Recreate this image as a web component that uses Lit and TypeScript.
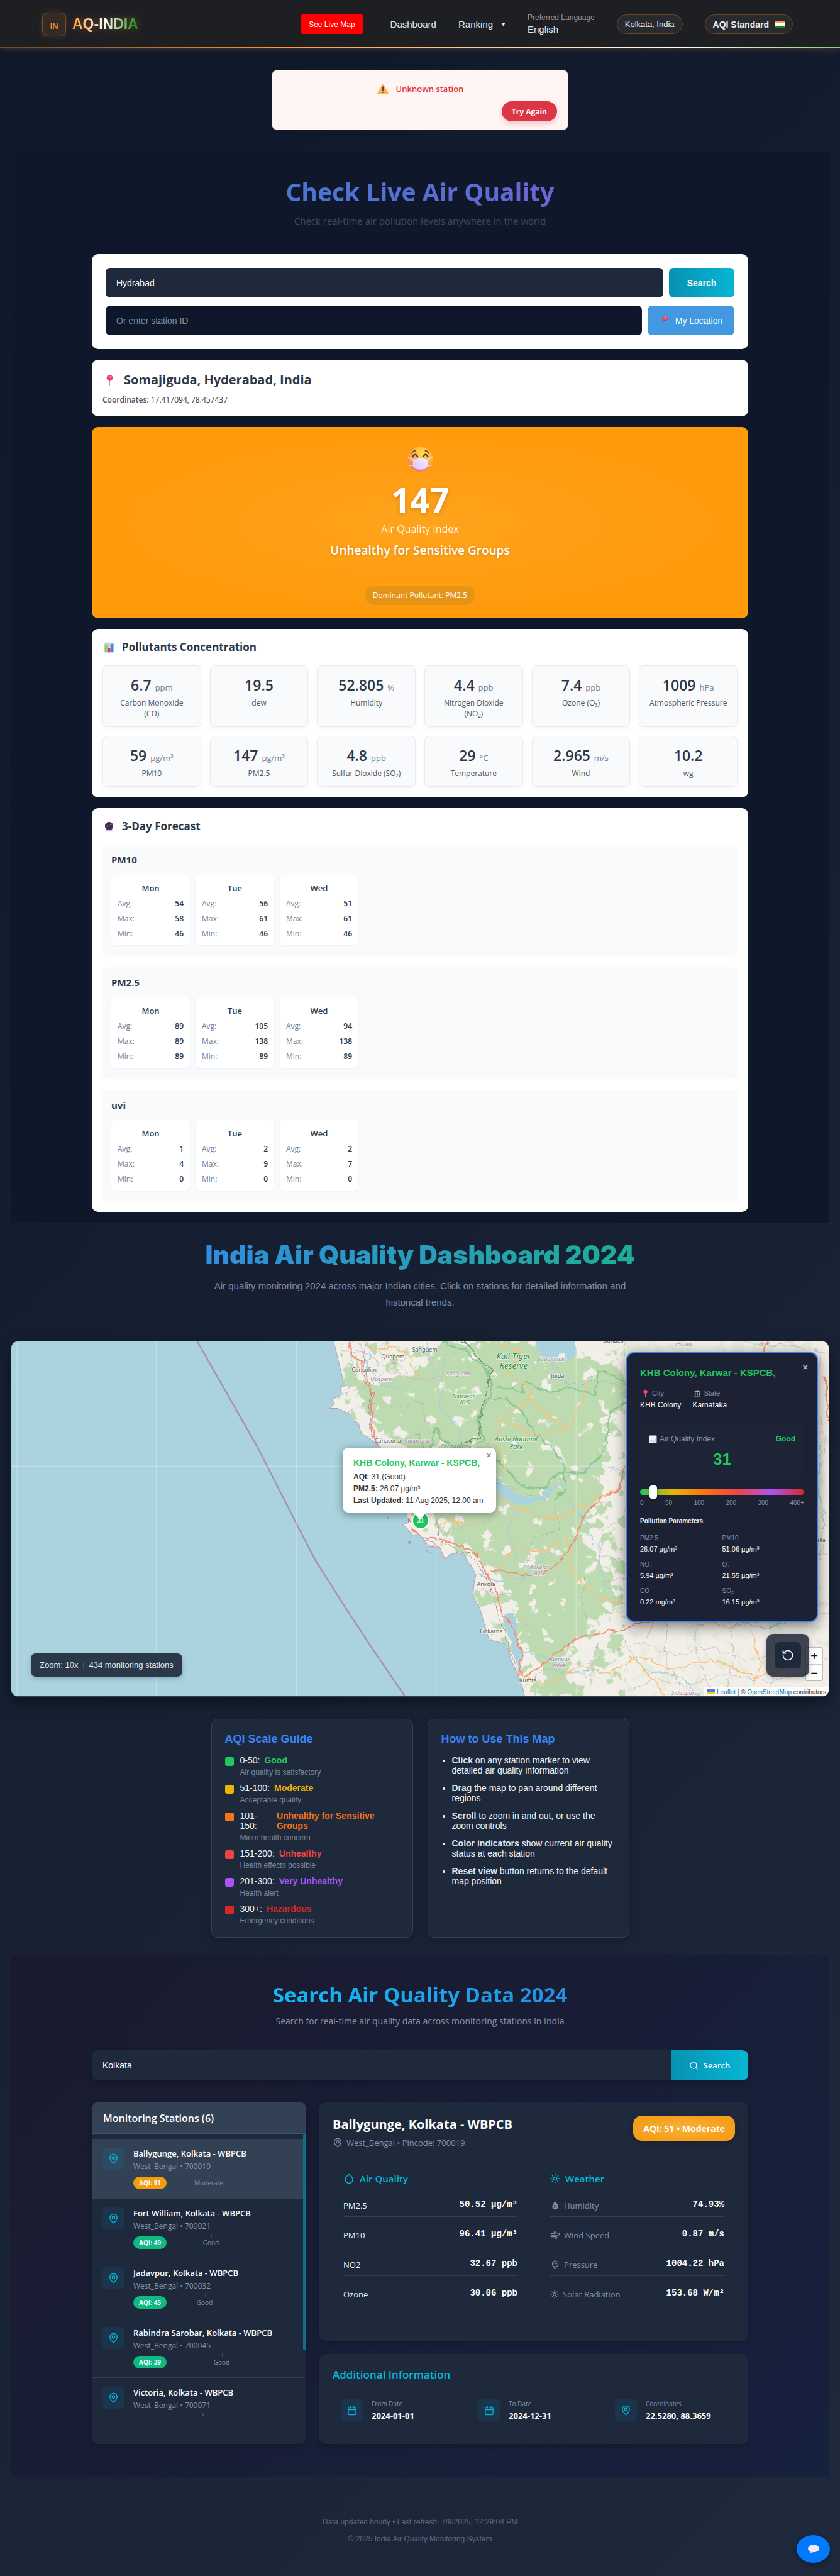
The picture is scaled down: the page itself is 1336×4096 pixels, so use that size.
import { LitElement, html, css, svg } from "lit";
import { customElement } from "lit/decorators.js";
import { styleMap } from "lit/directives/style-map.js";

type Svg = ReturnType<typeof svg>;

/* ---------- icons ---------- */

const stroke = (size: number, body: Svg, cls = "") => html`<svg class=${cls} width=${size} height=${size} viewBox="0 0 24 24" fill="none" stroke="currentColor" stroke-width="2" stroke-linecap="round" stroke-linejoin="round" aria-hidden="true">${body}</svg>`;

const mapPin = (size: number, cls = "") =>
  stroke(size, svg`<path d="M20 10c0 6-8 12-8 12s-8-6-8-12a8 8 0 0 1 16 0Z"/><circle cx="12" cy="10" r="3"/>`, cls);
const calendar = (size: number) =>
  stroke(size, svg`<rect x="3" y="4" width="18" height="18" rx="2"/><path d="M16 2v4M8 2v4M3 10h18"/>`);
const drop = (size: number) =>
  stroke(size, svg`<path d="M12 2.700l5.700 5.700a8 8 0 1 1-11.300 0z"/>`);
const sun = (size: number) =>
  stroke(size, svg`<circle cx="12" cy="12" r="4"/><path d="M12 2v2M12 20v2M4.900 4.900l1.400 1.400M17.700 17.700l1.400 1.400M2 12h2M20 12h2M6.300 17.700l-1.400 1.400M19.100 4.900l-1.400 1.400"/>`);
const wind = (size: number) =>
  stroke(size, svg`<path d="M17.700 7.700A2.500 2.500 0 1 1 19.500 12H2M9.600 4.600A2 2 0 1 1 11 8H2M12.600 19.400A2 2 0 1 0 14 16H2"/>`);
const magnifier = (size: number) =>
  stroke(size, svg`<circle cx="11" cy="11" r="8"/><path d="M21 21l-4.300-4.300"/>`);
const reset = (size: number) =>
  stroke(size, svg`<path d="M3 12a9 9 0 1 0 9-9 9.750 9.750 0 0 0-6.740 2.740L3 8"/><path d="M3 3v5h5"/>`);
const humidity = (size: number) => html`<svg width=${size} height=${size} viewBox="0 0 24 24" aria-hidden="true">
  <path fill="currentColor" d="M12 2c4 5 7 8.600 7 12.500a7 7 0 0 1-14 0C5 10.600 8 7 12 2Z"/>
  <path d="M9 17.500l6-7" stroke="#1e293b" stroke-width="1.600"/>
  <circle cx="9.500" cy="12" r="1.600" fill="#1e293b"/><circle cx="14.500" cy="16" r="1.600" fill="#1e293b"/></svg>`;
const gauge = (size: number) => html`<svg width=${size} height=${size} viewBox="0 0 24 24" fill="none" stroke="currentColor" stroke-width="1.800" aria-hidden="true">
  <circle cx="12" cy="10" r="7"/><path d="M9.500 17v4h5v-4M12 11l2-4M8 10h1M15 10h1"/></svg>`;

const pushpin = (size: number) => html`<svg width=${size} height=${size} viewBox="0 0 24 24" aria-hidden="true">
  <path d="M11.300 12h1.400v10.500h-1.400z" fill="#a8a5b5"/>
  <circle cx="12" cy="7.500" r="6" fill="#e3255c"/><circle cx="12.500" cy="7" r="4.800" fill="#f8476f"/>
  <ellipse cx="14" cy="5" rx="1.700" ry="1.300" fill="#ffb3c6"/></svg>`;
const warning = (size: number) => html`<svg width=${size} height=${size} viewBox="0 0 24 24" aria-hidden="true">
  <path d="M12 2.500 22 20.500q.5 1.500-1 1.500H3q-1.500 0-1-1.500Z" fill="#ffb04a" stroke="#ffc36b" stroke-linejoin="round"/>
  <path d="M12 8.500v7" stroke="#4b3b45" stroke-width="2.200" stroke-linecap="round"/><circle cx="12" cy="19" r="1.300" fill="#4b3b45"/></svg>`;
const maskFace = (size: number) => html`<svg width=${size} height=${size} viewBox="0 0 48 48" aria-hidden="true">
  <defs><radialGradient id="skin" cx=".6" cy=".25" r=".8"><stop offset="0" stop-color="#ffe04d"/><stop offset=".6" stop-color="#ffa93f"/><stop offset="1" stop-color="#f0708c"/></radialGradient>
  <linearGradient id="cloth" x1="1" y1="0" x2="0" y2="1"><stop offset="0" stop-color="#f7f2ff"/><stop offset="1" stop-color="#d9c2ff"/></linearGradient></defs>
  <circle cx="24" cy="24" r="23" fill="url(#skin)"/>
  <path d="M1.500 20l11 6M46.500 20l-11 6M3 35h11M45 35H34" stroke="#e6d8ff" stroke-width="1.800"/>
  <path d="M10 19q4-8 9 0M29 19q5-8 9 0" fill="none" stroke="#5b3a4e" stroke-width="2.800" stroke-linecap="round"/>
  <path d="M8 13q2-5 7-5M40 13q-2-5-7-5" fill="none" stroke="#5b3a4e" stroke-width="1.800" stroke-linecap="round"/>
  <path d="M10.500 24.500q7-.5 11-3 2.500-1.500 5 0 4 2.500 11 3V37q-6 6-13.500 6T10.500 37Z" fill="url(#cloth)"/></svg>`;
const chart = (size: number) => html`<svg width=${size} height=${size} viewBox="0 0 24 24" aria-hidden="true">
  <rect x="1" y="1" width="22" height="22" rx="2" fill="#d5d0de"/><path d="M1 8h22M1 15h22M8 1v22M16 1v22" stroke="#b9b3c5" stroke-width=".7"/>
  <rect x="2.500" y="7" width="5.500" height="16" fill="#7fd858"/><rect x="9.300" y="13" width="5.500" height="10" fill="#e02d6f"/><rect x="16" y="4" width="5.500" height="19" fill="#2f8fe6"/></svg>`;
const crystal = (size: number) => html`<svg width=${size} height=${size} viewBox="0 0 24 24" aria-hidden="true">
  <path d="M5 18.500h14l1 4.500H4Z" fill="#d9c4ee"/><circle cx="12" cy="10.500" r="9.500" fill="#54406b"/><circle cx="12" cy="10.500" r="7.500" fill="#3b2d52"/>
  <path d="M9 6l1 3.500 3 1-3 1L9 15l-1-3.500-3-1 3-1zM16 5l.6 1.900 1.900.6-1.900.6L16 10l-.6-1.900-1.900-.6 1.900-.6z" fill="#ff9d57"/></svg>`;
const building = (size: number) => html`<svg width=${size} height=${size} viewBox="0 0 24 24" aria-hidden="true">
  <path d="M12 2 22 8v2H2V8ZM2 20h20v3H2ZM4 11h3v8H4zM10.500 11h3v8h-3zM17 11h3v8h-3z" fill="#b7adbd"/></svg>`;
const haze = (size: number) => html`<svg width=${size} height=${size} viewBox="0 0 24 24" aria-hidden="true">
  <rect x="1" y="1" width="22" height="22" rx="2" fill="#f3f0f7"/><path d="M3 15c5-6 8 3 12-2s5-3 6-4v12H3Z" fill="#dcd7e3"/></svg>`;
const bubble = html`<svg width="20" height="16" viewBox="0 0 28 22" aria-hidden="true">
  <ellipse cx="14" cy="10" rx="12.500" ry="8.500" fill="#f3eaf8"/><path d="M6 15v6.500l7-4Z" fill="#e3d3ee"/></svg>`;
const flag = html`<svg width="16" height="12" viewBox="0 0 16 12" role="img" aria-label="India"><rect width="16" height="12" rx="2" fill="#fff"/>
  <path d="M0 4V2q0-2 2-2h12q2 0 2 2v2z" fill="#ff9933"/><path d="M0 8v2q0 2 2 2h12q2 0 2-2V8z" fill="#138808"/></svg>`;

/* ---------- data ---------- */

const pollutants = [
  ["6.7", "ppm", "Carbon Monoxide\n(CO)"], ["19.5", "", "dew"], ["52.805", "%", "Humidity"],
  ["4.4", "ppb", "Nitrogen Dioxide\n(NO₂)"], ["7.4", "ppb", "Ozone (O₃)"], ["1009", "hPa", "Atmospheric Pressure"],
  ["59", "µg/m³", "PM10"], ["147", "µg/m³", "PM2.5"], ["4.8", "ppb", "Sulfur Dioxide (SO₂)"],
  ["29", "°C", "Temperature"], ["2.965", "m/s", "Wind"], ["10.2", "", "wg"],
];
const days = ["Mon", "Tue", "Wed"];
const forecast: [string, number[][]][] = [
  ["PM10", [[54, 58, 46], [56, 61, 46], [51, 61, 46]]],
  ["PM2.5", [[89, 89, 89], [105, 138, 89], [94, 138, 89]]],
  ["uvi", [[1, 4, 0], [2, 9, 0], [2, 7, 0]]],
];
const scale = [
  ["#22c55e", "0-50:", "Good", "Air quality is satisfactory"],
  ["#eab308", "51-100:", "Moderate", "Acceptable quality"],
  ["#f97316", "101-150:", "Unhealthy for Sensitive Groups", "Minor health concern"],
  ["#ef4444", "151-200:", "Unhealthy", "Health effects possible"],
  ["#a855f7", "201-300:", "Very Unhealthy", "Health alert"],
  ["#dc2626", "300+:", "Hazardous", "Emergency conditions"],
];
const tips = [
  ["Click", "on any station marker to view detailed air quality information"],
  ["Drag", "the map to pan around different regions"],
  ["Scroll", "to zoom in and out, or use the zoom controls"],
  ["Color indicators", "show current air quality status at each station"],
  ["Reset view", "button returns to the default map position"],
];
const stations: [string, string, number, string][] = [
  ["Ballygunge, Kolkata - WBPCB", "700019", 51, "Moderate"],
  ["Fort William, Kolkata - WBPCB", "700021", 49, "Good"],
  ["Jadavpur, Kolkata - WBPCB", "700032", 45, "Good"],
  ["Rabindra Sarobar, Kolkata - WBPCB", "700045", 39, "Good"],
  ["Victoria, Kolkata - WBPCB", "700071", 42, "Good"],
];
const params = [
  ["PM2.5", "26.07 µg/m³"], ["PM10", "51.06 µg/m³"], ["NO₂", "5.94 µg/m³"],
  ["O₃", "21.55 µg/m³"], ["CO", "0.22 mg/m³"], ["SO₂", "16.15 µg/m³"],
];
const air = [["PM2.5", "50.52 µg/m³"], ["PM10", "96.41 µg/m³"], ["NO2", "32.67 ppb"], ["Ozone", "30.06 ppb"]];
const weather: [unknown, string, string][] = [
  [humidity(16), "Humidity", "74.93%"], [wind(16), "Wind Speed", "0.87 m/s"],
  [gauge(16), "Pressure", "1004.22 hPa"], [sun(14), "Solar Radiation", "153.68 W/m²"],
];

/* ---------- map canvas ---------- */

const land = "M764 3070L772 3106 786 3163 791 3172 779 3174 781 3191 769 3199 760 3203 765 3213 755 3224 772 3224 800 3237 810 3254 820 3257 826 3281 842 3290 855 3300 871 3314 880 3345 900 3370 905 3400 925 3430 930 3462 934 3485 920 3490 928 3495 944 3514 957 3511 969 3523 976 3540 985 3536 1000 3540 992 3530 972 3525 981 3540 1006 3542 1018 3569 1030 3558 1046 3553 1061 3558 1076 3580 1089 3605 1085 3621 1082 3654 1098 3682 1104 3704 1119 3753 1144 3759 1159 3764 1168 3797 1183 3830 1196 3863 1202 3890H1900V3070Z";
const forest = "M815 3185L850 3150 872 3175 905 3150 950 3130 985 3120 1015 3070 1235 3070 1250 3110 1330 3110 1420 3115 1435 3200 1385 3250 1372 3300 1395 3330 1370 3380 1385 3420 1345 3470 1350 3540 1400 3600 1410 3690 1345 3725 1300 3770 1290 3830 1340 3883 1238 3883 1250 3830 1200 3770 1185 3690 1150 3620 1110 3570 1050 3530 1010 3500 985 3440 930 3330 890 3290 850 3240Z";

const label = (x: number, y: number, text: string, cls = "town") => svg`<text class=${cls} x=${x} y=${y + 5}>${text}</text>`;

const mapCanvas = html`<svg class="canvas" viewBox="26 3070 1870 813" preserveAspectRatio="xMidYMid slice" role="img" aria-label="Map of the Karwar coast">
  <defs>
    <filter id="rough" x="-5%" y="-5%" width="110%" height="110%"><feTurbulence type="fractalNoise" baseFrequency=".05" numOctaves="3" seed="4"/><feDisplacementMap in="SourceGraphic" scale="16" xChannelSelector="R" yChannelSelector="G"/></filter>
    <filter id="edge" x="-5%" y="-5%" width="110%" height="110%"><feTurbulence type="fractalNoise" baseFrequency=".025" numOctaves="4" seed="9"/><feDisplacementMap in="SourceGraphic" scale="60" xChannelSelector="R" yChannelSelector="G"/></filter>
    <filter id="clearing" color-interpolation-filters="sRGB" x="0" y="0" width="100%" height="100%"><feTurbulence type="fractalNoise" baseFrequency=".03" numOctaves="4" seed="21"/><feColorMatrix values="0 0 0 0 .949 0 0 0 0 .937 0 0 0 0 .914 16 0 0 0 -10.500"/><feComposite in2="SourceAlpha" operator="in"/></filter>
    <filter id="woods" color-interpolation-filters="sRGB" x="0" y="0" width="100%" height="100%"><feTurbulence type="fractalNoise" baseFrequency=".028" numOctaves="4" seed="33"/><feColorMatrix values="0 0 0 0 .745 0 0 0 0 .855 0 0 0 0 .69 16 0 0 0 -8.700"/><feComposite in2="SourceAlpha" operator="in"/></filter>
    <clipPath id="shore"><path d=${land}/></clipPath>
  </defs>
  <rect x="26" y="3070" width="1870" height="813" fill="#aad3df"/>
  <path d=${land} fill="#f2efe9" stroke="#b79cc0" stroke-width="1.500"/>
  <g clip-path="url(#shore)">
    <path d="M764 3070H1430V3883H764Z" fill="#000" filter="url(#woods)"/>
    <g opacity=".4"><path d="M1430 3070H1896V3883H1430Z" fill="#000" filter="url(#woods)" opacity=".5"/></g>
    <path d=${forest} fill="#bedab0" filter="url(#edge)"/>
    <path d="M764 3070H1500V3883H764Z" fill="#000" filter="url(#clearing)"/>
    <g filter="url(#rough)" fill="none" stroke-linejoin="round">
      <path d="M1220 3062l20 40 30 10 15-20 15 25 20-20-10-30zM1130 3375l25 28 35 20 40 5 30-25 20-8-10 18-25 18-40 14-40-6-36-24z" fill="#aad3df"/>
      <path d="M1158 3690l18 5 10 30-4 30 16 35-6 40-14-35-14-50-10-30z" fill="#aad3df"/>
      <g stroke="#a3cfde" stroke-width="2">
        <path d="M975 3070l10 50 30 40-10 60 40 40 20 80 60 40M1020 3110l-40 60M1260 3100l10 50 40 30 50-30M1290 3385l40-20 60-10 50 20 60-10M1280 3390l30 60 30 30 20 60M1190 3440l-30 60 20 60M800 3080l10 40-10 60M850 3075l-10 60 40 40 60 10M1380 3520l-10 60 20 60M1500 3390l20 60 60 20 30 70 80 10 70 60M1600 3720l60-20 90 30 80-30M1190 3780l60 10 40 40 80-10M1090 3600l50 20 60-10 60-60"/>
        <path d="M1430 3760l40 60 90 20 40 40M1880 3300l-10 90 15 80-10 90M960 3450l80-20 90-30"/>
      </g>
      <g stroke="#b3a4b8" stroke-width="1.300" stroke-dasharray="9 4 3 4">
        <path d="M780 3240l60-30 70 10 50-10 20 60-60 30-80-10M1110 3290l20 40-10 60 90 30 60 20 10 60-60 20-20 70M1340 3590l-10 90 40 70-30 90M1440 3640l60 40 100-20 80 60 100-20M1260 3110l40 60 90-10 60 40M1000 3470l10 60"/>
      </g>
      <g stroke="#c3b8bb" stroke-width="1.200">
        <path d="M780 3090l60 10 50 40 80 20 60-20M800 3130l50-20 30-40M790 3190l60-20 50-50 60-20M820 3070l20 60-10 60M880 3080l20 40 60 40M1000 3560l30-60 90-20M1100 3640l60 10 40-30M1120 3740l40-30 50 10M1200 3860l50-40 90 10"/>
        <path d="M1370 3560l80 20 40-30 90 20 60-40 110 30 60-20 86 20M1380 3620l70-10 60 40 90-20 50 40 90-10 60 30 96-20M1420 3700l60 10 60-40 80 30 60-20 100 30 116-20M1400 3780l70-20 80 30 70-20 90 30 80-20 106 20M1440 3870l60-30 70 20 90-30 100 20 80-20M1480 3540l10 90 40 60-10 90 40 100M1580 3540l-10 80 30 70-10 80 40 110M1670 3720l10 80-20 80M1760 3720l20 70-20 90M1380 3350l60 40-10 80 30 90M1880 3100l-20 90 30 110-20 100 20 130-30 90M1700 3070l60 10 60-10M1740 3080l80 0 70 20M1420 3480l-40 20-10 50"/>
      </g>
      <g stroke="#7fc28a" stroke-width="3.500" opacity=".8">
        <path d="M1010 3070l50 20 60 50 5 50-30 60 10 50-70 20-40-50-10 60 30 50M1100 3205l60-5 40 40 30 50 30 20 30 40 5 60-30 20M1200 3160l60 30 40-15 60 20 10-60 60 30M1135 3340l60 60 50 10 30-40 60 5 50-60 10-80 40-30M1200 3165l-5 20-60-10M956 3280l20 50 10 50"/>
      </g>
      <path d="M1060 3070l65 70-20 70-10 80-90 40" stroke="#6a8f70" stroke-width="2"/>
      <g stroke="#f9c17c" stroke-width="2.600">
        <path d="M830 3070l30 20 40-10 30 20 30 60M1120 3070l80 30-40 40 60 40-15 30-60 40-10 50 20 60 10 40M1200 3190l50 50 50 30 30-60 20-60M1300 3270l-80 20-60-40M1115 3390l60 60 90 30 60-30 80-40 50-10M1000 3490l30-10 60 10M1140 3590l40-50 60 10 60-30 10 80 60 60 70 10M1190 3830l60 30 80-50 60 20 70-40 80 30 90-20 100 40 60-20M1480 3750l40-90 70 0 50-60 10-60M1440 3790l60 60 20 30M1600 3700l70 30 70-60 70 20M1720 3730l20 80-20 60M1000 3540l30-20"/>
      </g>
      <g stroke="#f28d74" stroke-width="3">
        <path d="M798 3070l6 30 20 20 10 40 20 30-5 60 15 60 20 40M940 3500l30 20 40 5 50 15 30 20 40 70 20 60 25 40 20 60-5 40-30 20-20 90M1125 3595l60 5 30 10 50-20 50-60 20-60 40-40 40-20 20-60M1200 3840l40-30 80-60 100-20 60-20 80-20M1885 3150l10 100M1760 3070l-40 60"/>
      </g>
      <g stroke="#8b8690" stroke-width="1.300"><path d="M835 3075l-5 50 20 60-5 60 10 60M1000 3480l10 50 60 25 40 50 30 90 20 60 20 60-30 120"/></g>
    </g>
  </g>
  <g fill="#b79cc0"><circle cx="888" cy="3474" r="3"/><circle cx="937" cy="3530" r="4"/><circle cx="976" cy="3549" r="2"/><circle cx="985" cy="3554" r="2"/></g>
  <path d="M451 3070L590 3314 679 3489 722 3572 788 3676 855 3778 927 3883" fill="none" stroke="#a68fb0" stroke-width="3.500"/>
  <path d="M39 3070v813M358 3070v813M678 3070v813M998 3070v813M1318 3070v813M1638 3070v813M26 3356h1870M26 3676h1870" stroke="#fff" stroke-opacity=".55"/>
  ${label(899, 3104, "Quepem")}${label(972, 3089, "Sanguem")}${label(833, 3135, "Cuncolim")}${label(872, 3156, "Quepem", "taluk")}
  ${label(887, 3298, "Canacona")}${label(954, 3297, "Canacona", "taluk")}${label(1175, 3106, "Kali Tiger", "park big")}${label(1175, 3128, "Reserve", "park big")}
  ${label(1261, 3110, "Supa taluk", "taluk")}${label(1048, 3143, "Sanguem", "taluk")}${label(1276, 3150, "Joida")}${label(1403, 3069, "Dandeli")}
  ${label(1062, 3195, "Netravali", "park")}${label(1062, 3210, "WLS", "park")}${label(1181, 3294, "Anshi National", "park mid")}${label(1181, 3312, "Park", "park mid")}${label(1034, 3310, "Cotigaon", "park")}
  ${label(1232, 3586, "Ankola", "taluk")}${label(1232, 3601, "taluk", "taluk")}${label(1112, 3625, "Ankola")}${label(1124, 3734, "Gokarna")}${label(1208, 3845, "Kumta")}
  ${label(1280, 3796, "Kumata", "taluk")}${label(1280, 3811, "taluk", "taluk")}${label(1566, 3874, "Siddapura", "taluk")}${label(1564, 3077, "taluku", "taluk")}${label(1878, 3525, "alla")}${label(937, 3480, "K")}
</svg>`;

/* ---------- component ---------- */

@customElement("app-root")
export class AppRoot extends LitElement {
  static styles = css`
    :host { display: block; min-height: 100vh; background: linear-gradient(135deg, #0f172a, #1e293b); color: #f1f5f9; font-family: "Liberation Sans", Arial, sans-serif; font-size: 14px; }
    * { box-sizing: border-box; }
    h1, h2, h3, h4, p, ul, dl, dd { margin: 0; padding: 0; }
    button, input, select { font: inherit; color: inherit; border: 0; margin: 0; }
    svg { display: block; flex: none; }
    .ui { font-family: "Open Sans", "Noto Sans", sans-serif; }

    header { display: flex; align-items: center; justify-content: space-between; height: 77px; padding: 0 75px 0 67px; background: linear-gradient(90deg, #ff993355, #ff9933 34%, #ffffff 81%, #8cc98a) bottom / 100% 3px no-repeat, #1e1f22; box-shadow: 0 1px 10px #ff993333; }
    .brand { display: flex; align-items: center; gap: 10px; color: #551a8b; text-decoration: none; }
    .brand-mark { width: 38px; height: 38px; padding-top: 6px; display: grid; place-items: center; border: 1px solid #7a4f27; border-radius: 9px; background: #352b26; color: #ff9933; font: 600 12px "Open Sans", sans-serif; box-shadow: 0 0 10px #ff993326; }
    .brand-name { font-size: 23px; font-weight: 700; text-decoration: underline; background: linear-gradient(90deg, #ff9933, #ffffff 50%, #138808); -webkit-background-clip: text; background-clip: text; -webkit-text-fill-color: transparent; filter: drop-shadow(0 0 6px #ff993355); }
    nav { display: flex; align-items: center; gap: 35px; }
    nav a { color: #e6e6e6; text-decoration: none; font-size: 15px; }
    nav .live { height: 31px; margin-right: 8px; padding: 0 13px; display: flex; align-items: center; border-radius: 4px; background: #ff0000; color: #fff; font-size: 12px; }
    .rank { display: flex; align-items: center; gap: 13px; background: none; padding: 0; font-size: 15px; color: #e6e6e6; }
    .caret { width: 7px; height: 6px; background: #fff; clip-path: polygon(0 0, 100% 0, 50% 100%); }
    .lang { display: flex; flex-direction: column; gap: 3px; font-size: 12px; color: #9a9a9a; }
    .lang select { appearance: none; padding: 0; background: none; font-size: 15px; line-height: 18px; color: #e6e6e6; }
    .pill { height: 31px; display: flex; align-items: center; gap: 9px; padding: 0 12px; border: 1px solid #68482b; border-radius: 18px; background: #292a2e; font-size: 13px; color: #f0f0f0; }
    .pill.std { font-size: 14px; font-weight: 700; }

    main { padding: 35px 17px 0; }
    .alert { width: 470px; max-width: 100%; margin: 0 auto 35px; padding: 17px 17px 13px; border-radius: 6px; background: #fff5f5; display: flex; flex-direction: column; align-items: center; gap: 8px; }
    .alert p { display: flex; align-items: center; gap: 11px; height: 24px; font-size: 13px; font-weight: 600; color: #dc3545; }
    .alert button { align-self: flex-end; height: 32px; padding: 0 16px; border-radius: 16px; background: #dc3545; color: #fff; font-weight: 700; font-size: 12px; font-family: "Open Sans", sans-serif; box-shadow: 0 4px 8px #dc354540; }

    .checker { background: #0f172a; padding: 40px 17px 17px; }
    .wrap { max-width: 1044px; margin: 0 auto; }
    .title { text-align: center; -webkit-background-clip: text; background-clip: text; color: transparent; }
    .checker .title { font-size: 39px; line-height: 48px; font-weight: 700; background-image: linear-gradient(90deg, #3182ce, #805ad5); }
    .checker .sub { margin: 12px 0 43px; text-align: center; font-size: 15px; line-height: 20px; color: #3f4a5b; }
    .card { background: #fff; border-radius: 10px; margin-bottom: 17px; padding: 17px; color: #2d3748; }
    .card:last-child { margin-bottom: 0; }
    .finder { padding: 22px; display: flex; flex-direction: column; gap: 13px; font-family: "Liberation Sans", sans-serif; }
    .row { display: flex; gap: 9px; }
    .row input { flex: 1; min-width: 0; height: 47px; padding: 0 17px; border-radius: 7px; background: #1e293b; color: #fff; }
    .row input.alt { background: #0f172a; }
    .row input::placeholder { color: #8591a5; }
    .row button { height: 47px; width: 104px; border-radius: 7px; color: #fff; font-weight: 700; background: linear-gradient(90deg, #0891b2, #06b6d4); }
    .row .locate { width: 138px; display: flex; align-items: center; justify-content: center; gap: 8px; font-weight: 400; background: #4299e1; }
    .place { padding: 19px 17px 17px; }
    .place h3 { display: flex; align-items: center; gap: 13px; padding-left: 2px; font-size: 20px; line-height: 26px; font-weight: 700; }
    .place p { margin-top: 10px; font-size: 12px; line-height: 18px; }
    .place strong { font-weight: 600; color: #4a5568; }
    .index { padding: 31px 17px 21px; display: flex; flex-direction: column; align-items: center; background: radial-gradient(closest-side, #ffa31d, #ff9a0a); color: #fff; }
    .index .num { margin-top: 15px; font-size: 54px; line-height: 56px; font-weight: 700; text-shadow: 0 2px 7px #0003; }
    .index .cap { margin-top: 8px; font-size: 16px; line-height: 22px; opacity: .9; }
    .index .state { margin-top: 9px; font-size: 19px; line-height: 28px; font-weight: 600; text-shadow: 0 1px 4px #0003; }
    .index .dom { margin-top: 42px; height: 31px; padding: 0 13px; display: flex; align-items: center; border-radius: 16px; background: #e69418; font-size: 12px; }
    .card h3.head { display: flex; align-items: center; gap: 12px; padding-left: 2px; margin-bottom: 17px; font-size: 17px; line-height: 24px; font-weight: 700; }
    .tiles { display: grid; grid-template-columns: repeat(6, 1fr); gap: 14px; }
    .tile { padding: 15px 12px 12px; border: 1px solid #e7ebf0; border-radius: 8px; background: #f8fafc; text-align: center; box-shadow: 0 4px 10px #00000009; }
    .tile .val { font-size: 23px; line-height: 30px; font-weight: 600; }
    .tile .unit { font-size: 13px; line-height: 14px; font-weight: 500; color: #718096; }
    .tile .name { margin-top: 5px; white-space: pre-line; font-size: 12px; line-height: 17px; font-weight: 500; color: #4a5568; }
    .panels { display: flex; flex-direction: column; gap: 18px; }
    .panel { padding: 14px 14px 17px; border-radius: 8px; background: #f8fafc; }
    .panel h4 { font-size: 15px; line-height: 20px; font-weight: 700; }
    .days { display: flex; gap: 9px; margin-top: 14px; }
    .day { width: 125px; padding: 12px 10px 9px; border-radius: 7px; background: #fff; box-shadow: 0 1px 3px #0000000d; }
    .day h5 { margin: 0 0 7px; text-align: center; font-size: 13px; line-height: 18px; font-weight: 600; }
    .day dl { display: grid; grid-template-columns: auto auto; justify-content: space-between; row-gap: 6px; font-size: 12px; line-height: 18px; color: #718096; }
    .day dd { text-align: right; font-weight: 600; color: #2d3748; }

    .dash .title { width: fit-content; margin: 27px auto 0; font-family: Inter, sans-serif; font-size: 41px; line-height: 48px; font-weight: 900; background-image: linear-gradient(90deg, #308ddd, #1dae96); }
    .intro { border-bottom: 1px solid #2c394c; padding-bottom: 21px; }
    .intro p { max-width: 690px; margin: 13px auto 0; text-align: center; font-size: 15px; line-height: 26px; color: #8390a5; }
    .map { position: relative; height: 566px; margin-top: 26px; border: 1px solid #334155; border-radius: 11px; overflow: hidden; box-shadow: 0 10px 22px #0006; }
    .canvas { width: 100%; height: 100%; }
    .canvas text { font-family: "Noto Sans", sans-serif; text-anchor: middle; paint-order: stroke; stroke: #ffffffaa; stroke-width: 2px; font-size: 13px; fill: #555; }
    .canvas .taluk { font-style: italic; fill: #a57fa6; }
    .canvas .park { font-style: italic; fill: #4c9a4f; }
    .canvas .big { font-size: 19px; fill: #2d8a3c; }
    .canvas .mid { font-size: 15px; fill: #2d8a3c; }
    .marker { position: absolute; left: 637px; top: 271px; width: 28px; height: 28px; border: 2px solid #fff; border-radius: 50%; background: #22c55e; color: #fff; display: grid; place-items: center; font-size: 10px; font-weight: 700; }
    .popup { position: absolute; left: 527px; top: 169px; width: 244px; height: 103px; padding: 15px 17px; border-radius: 9px; background: #fff; color: #333; box-shadow: 0 3px 14px #0006; }
    .popup::after { content: ""; position: absolute; left: 112px; bottom: -11px; width: 22px; height: 12px; background: #fff; clip-path: polygon(0 0, 100% 0, 50% 100%); }
    .popup h4 { font-size: 14px; line-height: 18px; margin-bottom: 4px; color: #22c55e; white-space: nowrap; }
    .popup p { font-size: 12px; line-height: 19px; white-space: nowrap; }
    .close { position: absolute; right: 7px; top: 3px; padding: 0; background: none; font-size: 15px; line-height: 18px; color: #757575; }
    .status { position: absolute; left: 31px; bottom: 31px; height: 37px; padding: 0 14px; display: flex; align-items: center; gap: 8px; border-radius: 8px; background: #1e293bea; color: #e2e8f0; font-size: 13px; box-shadow: 0 3px 8px #0003; }
    .status i { width: 1px; height: 12px; background: #475569; }
    .details { position: absolute; right: 17px; top: 17px; width: 305px; height: 429px; padding: 21px 20px; border: 2px solid #3b82f6; border-radius: 11px; background: #161c2ef8; box-shadow: 0 6px 22px #0008; }
    .details h4 { font-size: 15px; line-height: 20px; color: #22c55e; }
    .details .close { right: 14px; top: 13px; color: #a7b0bf; font-weight: 700; }
    .where { display: flex; gap: 18px; margin-top: 14px; font-size: 12px; line-height: 16px; color: #fff; }
    .where span { display: flex; align-items: center; gap: 4px; padding-left: 2px; margin-bottom: 3px; font-size: 11px; color: #8a94a6; }
    .aqi { height: 86px; margin-top: 23px; padding: 15px 14px; border-radius: 8px; background: #1c2436; }
    .aqi div { display: flex; align-items: center; gap: 4px; font-size: 12px; line-height: 16px; color: #8a94a6; }
    .aqi b { margin-left: auto; color: #22c55e; }
    .aqi p { margin-top: 9px; text-align: center; font-size: 26px; line-height: 30px; font-weight: 700; color: #22c55e; }
    .range { appearance: none; display: block; width: 100%; height: 9px; margin-top: 17px; border-radius: 5px; background: linear-gradient(90deg, #22c55e, #eab308 20%, #f97316 40%, #ef4444 60%, #a855f7 80%, #dc2626); }
    .range::-webkit-slider-thumb { appearance: none; width: 12px; height: 21px; border-radius: 4px; background: #fff; box-shadow: 0 1px 4px #0008; }
    .ticks { display: flex; justify-content: space-between; margin-top: 7px; font-size: 10px; line-height: 12px; color: #8a94a6; }
    .details h5 { margin: 16px 0 13px; font-size: 10px; line-height: 14px; color: #f1f5f9; }
    .params { display: grid; grid-template-columns: 1fr 1fr; row-gap: 11px; }
    .params dt { font-size: 10px; line-height: 14px; color: #8a94a6; }
    .params dd { margin-top: 3px; font-size: 11px; line-height: 14px; color: #fff; }
    .zoom { position: absolute; right: 9px; bottom: 24px; width: 28px; border: 1px solid #0004; border-radius: 3px; background: #fff; color: #111; }
    .zoom button { display: block; width: 100%; height: 26px; padding: 0; background: none; font-size: 20px; line-height: 24px; }
    .zoom button + button { border-top: 1px solid #ccc; }
    .resetter { position: absolute; right: 31px; bottom: 31px; padding: 13px; border-radius: 11px; background: #161c2ed0; box-shadow: 0 2px 8px #0004; }
    .resetter button { width: 42px; height: 42px; padding: 0; display: grid; place-items: center; border-radius: 8px; background: #1e293b; color: #fff; }
    .credit { position: absolute; right: 0; bottom: 0; height: 14px; padding: 0 4px 0 5px; display: flex; align-items: center; gap: 3px; background: #ffffffcc; color: #333; font-size: 10px; }
    .credit a { color: #0078a8; text-decoration: none; }

    .guides { display: grid; grid-template-columns: repeat(2, 321px); justify-content: center; gap: 23px; margin: 35px 0 27px; }
    .guide { padding: 19px 21px; border: 1px solid #334155; border-radius: 11px; background: #1e293b; box-shadow: 0 4px 16px #0003; }
    .guide h3 { margin-bottom: 14px; font-size: 18px; line-height: 24px; color: #3b82f6; }
    .scale { display: flex; flex-direction: column; gap: 10px; }
    .step { display: flex; gap: 10px; line-height: 16px; }
    .swatch { flex: none; width: 14px; height: 14px; margin-top: 3px; border-radius: 3px; }
    .range-name { display: flex; gap: 7px; }
    .step p { margin-top: 4px; font-size: 12px; line-height: 14px; color: #7c889b; }
    .tips { display: flex; flex-direction: column; gap: 12px; padding-left: 17px; line-height: 16px; }
    .tips strong { color: #dbe3ee; }

    .search { background: linear-gradient(135deg, #1a1a2e, #16213e); padding: 42px 17px 52px; }
    .search .title { width: fit-content; margin: 0 auto; font-size: 33px; line-height: 44px; font-weight: 700; background-image: linear-gradient(90deg, #12baf6, #288fdf); }
    .search .sub { margin: 10px 0 36px; text-align: center; font-size: 14px; line-height: 20px; color: #8b94a6; }
    .bar { display: flex; height: 48px; border-radius: 9px; overflow: hidden; background: #1e293b; box-shadow: 0 4px 10px #0003; }
    .bar input { flex: 1; padding: 0 17px; background: none; color: #fff; font-family: "Liberation Sans", sans-serif; }
    .bar button { width: 123px; display: flex; align-items: center; justify-content: center; gap: 8px; border-radius: 0 9px 9px 0; background: linear-gradient(90deg, #0891b2, #06b6d4); color: #fff; font-weight: 600; font-size: 13px; }
    .results { display: grid; grid-template-columns: 341fr 682fr; gap: 21px; margin-top: 35px; }
    .box { border-radius: 9px; background: #1e293b; box-shadow: 0 4px 10px #0003; }
    .list { position: relative; overflow: hidden; }
    .list h3 { height: 50px; padding: 0 18px; display: flex; align-items: center; border-bottom: 1px solid #475569; background: #334155; font-size: 16px; font-weight: 600; color: #fff; }
    .scroller { height: 449px; padding: 8px 5px 0 0; overflow: hidden; }
    .thumb { position: absolute; right: 0; top: 50px; width: 5px; height: 344px; border-radius: 3px; background: #12708a; }
    .station { display: flex; gap: 14px; padding: 14px 17px; border-bottom: 1px solid #334155; }
    .station.on { background: #334155; }
    .badge { flex: none; width: 35px; height: 35px; display: grid; place-items: center; border-radius: 7px; background: #1b364c; color: #06b6d4; }
    .on .badge { background: #2d4c63; }
    .station .name { font-size: 13px; line-height: 18px; font-weight: 600; color: #fff; white-space: nowrap; }
    .station .loc { margin: 3px 0 6px; font-size: 12px; line-height: 18px; color: #8592a8; }
    .level { position: relative; display: flex; align-items: center; height: 21px; gap: 7px; }
    .chip { height: 20px; padding: 0 9px; border-radius: 10px; background: #10b981; color: #fff; font-size: 10px; line-height: 20px; font-weight: 700; }
    .chip.mid { background: #f59e0b; }
    .level-name { position: relative; flex: 1; text-align: center; font-size: 10px; color: #8592a8; }
    .level-name::before { content: ""; position: absolute; left: 50%; top: -7px; width: 2px; height: 6px; background: #4a4a4c; }
    .right { display: flex; flex-direction: column; gap: 21px; }
    .report { padding: 21px 21px 56px; }
    .report-head { display: flex; justify-content: space-between; align-items: flex-start; }
    .report h3 { font-size: 20px; line-height: 28px; font-weight: 700; color: #fff; }
    .report-head p { display: flex; align-items: center; gap: 6px; margin-top: 5px; font-size: 13px; line-height: 20px; color: #8592a8; }
    .tag { height: 40px; padding: 0 16px; display: flex; align-items: center; border-radius: 14px; background: radial-gradient(closest-side, #f8b23b, #f59e1b); color: #fff; font-size: 14px; font-weight: 700; box-shadow: 0 4px 12px #0003; }
    .cols { display: grid; grid-template-columns: 1fr 1fr; gap: 52px; margin-top: 36px; padding: 0 17px; }
    .cols h4 { display: flex; align-items: center; gap: 8px; height: 22px; margin-bottom: 3px; font-size: 15px; font-weight: 600; color: #06b6d4; }
    .line { display: flex; justify-content: space-between; height: 47px; padding-top: 19px; border-bottom: 1px solid #334155; }
    .line:last-child { border-bottom: 0; }
    .line dt { display: flex; align-items: center; gap: 6px; height: 20px; font-size: 13px; color: #f1f5f9; }
    .line.soft dt { color: #8592a8; }
    .line dd { font: 700 14px/16px "Liberation Mono", monospace; color: #fff; }
    .extra { padding: 21px 21px 36px; }
    .extra h4 { font-size: 17px; line-height: 24px; font-weight: 600; color: #06b6d4; }
    .facts { display: grid; grid-template-columns: repeat(3, 1fr); gap: 14px; margin-top: 27px; }
    .fact { display: flex; gap: 14px; padding-left: 13px; }
    .fact span { display: block; font-size: 10px; line-height: 15px; color: #8592a8; }
    .fact b { display: block; margin-top: 2px; font-size: 13px; line-height: 18px; color: #fff; }

    footer { margin-top: 35px; padding: 26px 0 45px; border-top: 1px solid #334155; text-align: center; font-size: 12px; line-height: 20px; color: #5d6b80; }
    footer p + p { margin-top: 7px; }
    .chat { position: absolute; right: 16px; bottom: 17px; width: 53px; height: 44px; padding: 0; display: grid; place-items: center; border-radius: 50%; background: #007bff; box-shadow: 0 3px 8px #0005; }
    .page { position: relative; }
  `;

  private header() {
    return html`<header>
      <a class="brand" href="#"><span class="brand-mark">IN</span><span class="brand-name">AQ-INDIA</span></a>
      <nav>
        <a class="live" href="#map">See Live Map</a>
        <a href="#dashboard">Dashboard</a>
        <button class="rank">Ranking <span class="caret"></span></button>
        <label class="lang">Preferred Language<select><option>English</option></select></label>
        <span class="pill">Kolkata, India</span>
        <span class="pill std">AQI Standard ${flag}</span>
      </nav>
    </header>`;
  }

  private checker() {
    return html`<section class="checker ui"><div class="wrap">
      <h1 class="title">Check Live Air Quality</h1>
      <p class="sub">Check real-time air pollution levels anywhere in the world</p>
      <form class="card finder" @submit=${(e: Event) => e.preventDefault()}>
        <div class="row"><input aria-label="City" .value=${"Hydrabad"} /><button>Search</button></div>
        <div class="row"><input class="alt" aria-label="Station ID" placeholder="Or enter station ID" /><button type="button" class="locate">${pushpin(17)} My Location</button></div>
      </form>
      <div class="card place">
        <h3>${pushpin(19)} Somajiguda, Hyderabad, India</h3>
        <p><strong>Coordinates:</strong> 17.417094, 78.457437</p>
      </div>
      <div class="card index">
        ${maskFace(41)}
        <div class="num">147</div><div class="cap">Air Quality Index</div>
        <div class="state">Unhealthy for Sensitive Groups</div>
        <div class="dom">Dominant Pollutant: PM2.5</div>
      </div>
      <div class="card">
        <h3 class="head">${chart(17)} Pollutants Concentration</h3>
        <div class="tiles">${pollutants.map(([v, u, n]) => html`<div class="tile"><div class="val">${v} <span class="unit">${u}</span></div><div class="name">${n}</div></div>`)}</div>
      </div>
      <div class="card">
        <h3 class="head">${crystal(17)} 3-Day Forecast</h3>
        <div class="panels">${forecast.map(([name, rows]) => html`<div class="panel"><h4>${name}</h4><div class="days">
          ${rows.map((r, i) => html`<div class="day"><h5>${days[i]}</h5><dl><dt>Avg:</dt><dd>${r[0]}</dd><dt>Max:</dt><dd>${r[1]}</dd><dt>Min:</dt><dd>${r[2]}</dd></dl></div>`)}
        </div></div>`)}</div>
      </div>
    </div></section>`;
  }

  private dashboard() {
    return html`<section class="dash" id="dashboard">
      <div class="intro"><h2 class="title">India Air Quality Dashboard 2024</h2>
        <p>Air quality monitoring 2024 across major Indian cities. Click on stations for detailed information and historical trends.</p></div>
      <div class="map" id="map">
        ${mapCanvas}
        <div class="marker">31</div>
        <div class="popup"><button class="close" aria-label="Close popup">×</button>
          <h4>KHB Colony, Karwar - KSPCB,</h4>
          <p><b>AQI:</b> 31 (Good)</p><p><b>PM2.5:</b> 26.07 µg/m³</p><p><b>Last Updated:</b> 11 Aug 2025, 12:00 am</p></div>
        <div class="status">Zoom: 10x<i></i>434 monitoring stations</div>
        <aside class="details"><button class="close" aria-label="Close details">×</button>
          <h4>KHB Colony, Karwar - KSPCB,</h4>
          <div class="where"><div><span>${pushpin(13)} City</span>KHB Colony</div><div><span>${building(12)} State</span>Karnataka</div></div>
          <div class="aqi"><div>${haze(13)} Air Quality Index<b>Good</b></div><p>31</p></div>
          <input class="range" type="range" min="0" max="500" .value=${"31"} aria-label="Air Quality Index" />
          <div class="ticks">${["0", "50", "100", "200", "300", "400+"].map((t) => html`<span>${t}</span>`)}</div>
          <h5>Pollution Parameters</h5>
          <dl class="params">${params.map(([k, v]) => html`<div><dt>${k}</dt><dd>${v}</dd></div>`)}</dl>
        </aside>
        <div class="zoom"><button aria-label="Zoom in">+</button><button aria-label="Zoom out">−</button></div>
        <div class="resetter"><button aria-label="Reset view">${reset(20)}</button></div>
        <div class="credit"><svg width="12" height="8" viewBox="0 0 12 8" aria-hidden="true"><path fill="#4c7be1" d="M0 0h12v4H0z"/><path fill="#ffd500" d="M0 4h12v4H0z"/></svg>
          <span><a href="#leaflet">Leaflet</a> | © <a href="#osm">OpenStreetMap</a> contributors</span></div>
      </div>
      <div class="guides">
        <div class="guide"><h3>AQI Scale Guide</h3><div class="scale">
          ${scale.map(([color, range, name, note]) => html`<div class="step"><span class="swatch" style=${styleMap({ background: color })}></span>
            <div><div class="range-name"><span>${range}</span><b style=${styleMap({ color })}>${name}</b></div><p>${note}</p></div></div>`)}
        </div></div>
        <div class="guide"><h3>How to Use This Map</h3>
          <ul class="tips">${tips.map(([a, b]) => html`<li><strong>${a}</strong> ${b}</li>`)}</ul></div>
      </div>
    </section>`;
  }

  private search() {
    return html`<section class="search ui"><div class="wrap">
      <h2 class="title">Search Air Quality Data 2024</h2>
      <p class="sub">Search for real-time air quality data across monitoring stations in India</p>
      <form class="bar" @submit=${(e: Event) => e.preventDefault()}><input aria-label="Search stations" .value=${"Kolkata"} /><button>${magnifier(15)} Search</button></form>
      <div class="results">
        <div class="box list"><h3>Monitoring Stations (6)</h3>
          <div class="scroller">${stations.map(([name, pin, aqi, level], i) => html`<div class="station ${i === 0 ? "on" : ""}">
            <span class="badge">${mapPin(17)}</span>
            <div><div class="name">${name}</div><div class="loc">West_Bengal • ${pin}</div>
              <div class="level"><span class="chip ${aqi > 50 ? "mid" : ""}">AQI: ${aqi}</span><span class="level-name">${level}</span></div></div>
          </div>`)}</div><span class="thumb"></span></div>
        <div class="right">
          <div class="box report">
            <div class="report-head"><div><h3>Ballygunge, Kolkata - WBPCB</h3><p>${mapPin(16)} West_Bengal • Pincode: 700019</p></div><span class="tag">AQI: 51 • Moderate</span></div>
            <div class="cols">
              <div><h4>${drop(18)} Air Quality</h4><dl>${air.map(([k, v]) => html`<div class="line"><dt>${k}</dt><dd>${v}</dd></div>`)}</dl></div>
              <div><h4>${sun(16)} Weather</h4><dl>${weather.map(([i, k, v]) => html`<div class="line soft"><dt>${i}${k}</dt><dd>${v}</dd></div>`)}</dl></div>
            </div>
          </div>
          <div class="box extra"><h4>Additional Information</h4><div class="facts">
            <div class="fact"><div class="badge">${calendar(16)}</div><div><span>From Date</span><b>2024-01-01</b></div></div>
            <div class="fact"><div class="badge">${calendar(16)}</div><div><span>To Date</span><b>2024-12-31</b></div></div>
            <div class="fact"><div class="badge">${mapPin(17)}</div><div><span>Coordinates</span><b>22.5280, 88.3659</b></div></div>
          </div></div>
        </div>
      </div>
    </div></section>`;
  }

  render() {
    return html`<div class="page">
      ${this.header()}
      <main>
        <div class="alert ui" role="alert"><p>${warning(20)} Unknown station</p><button>Try Again</button></div>
        ${this.checker()}
        ${this.dashboard()}
        ${this.search()}
        <footer><p>Data updated hourly • Last refresh: 7/9/2025, 12:29:04 PM</p><p>© 2025 India Air Quality Monitoring System</p></footer>
      </main>
      <button class="chat" aria-label="Open chat">${bubble}</button>
    </div>`;
  }
}
